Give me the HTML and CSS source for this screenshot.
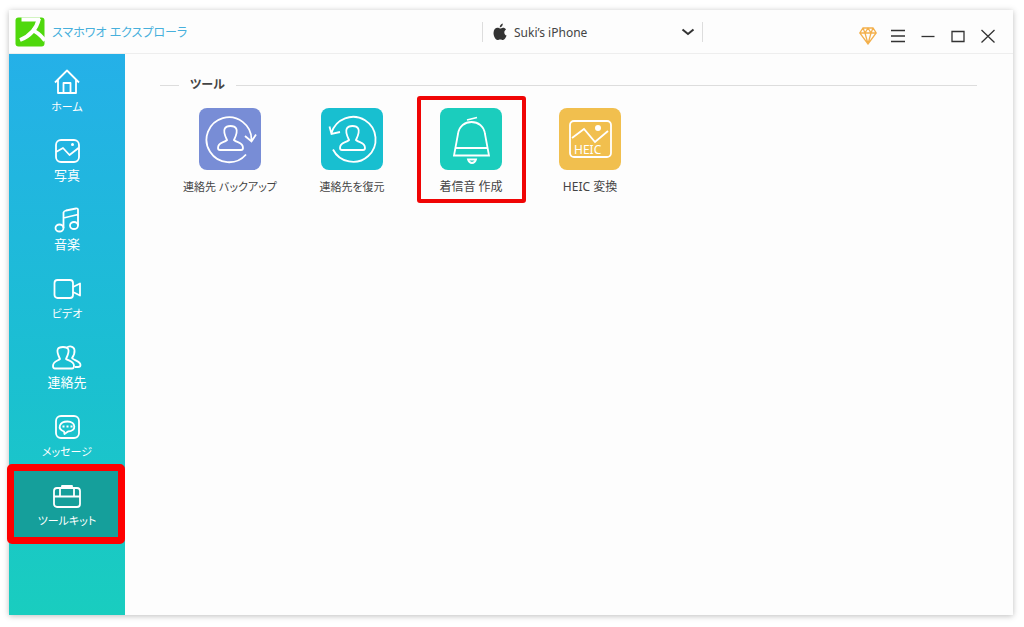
FILE: index.html
```
<!DOCTYPE html>
<html lang="ja">
<head>
<meta charset="utf-8">
<meta name="viewport" content="width=device-width, initial-scale=1">
<title>スマホワオ エクスプローラ</title>
<link rel="stylesheet" href="styles.css">
</head>
<body>
<div class="window">
  <header class="titlebar">
    <div class="brand">
      <svg class="logo" viewBox="0 0 30 30" aria-hidden="true">
        <rect x="0.500" y="0.500" width="29" height="29" rx="3" fill="#4fd80c"/>
        <path d="M6.500 0.500H25V4.500H6.500z" fill="#fff"/>
        <path d="M24 1.500C21.500 12 14 19.500 5 23" fill="none" stroke="#fff" stroke-width="4"/>
        <path d="M17 13C21 14.500 26 18.500 30 23.500" fill="none" stroke="#fff" stroke-width="4"/>
      </svg>
      <span class="brand-name">スマホワオ エクスプローラ</span>
    </div>
    <button class="device" type="button" aria-haspopup="listbox">
      <svg class="apple" viewBox="0 0 14 18" aria-hidden="true"><path d="M9.800 0.500C9.900 2.500 8.500 4.300 6.800 4.400C6.600 2.600 8 0.900 9.800 0.500ZM7 5.500C8 5.500 8.700 4.700 10 4.700C11.300 4.700 12.400 5.400 13 6.400C10.500 7.900 10.900 11.500 13.600 12.600C12.900 14.600 11.500 17 10 17C9 17 8.500 16.400 7.300 16.400C6 16.400 5.500 17 4.600 17C2.700 17 0.500 13.500 0.500 10C0.500 6.600 2.500 4.800 4.500 4.800C5.600 4.800 6.300 5.500 7 5.500Z" fill="#333"/></svg>
      <span class="device-name">Suki’s iPhone</span>
      <svg class="chevron" viewBox="0 0 14 8" aria-hidden="true"><path d="M1.500 1.500L7 6L12.500 1.500" fill="none" stroke="#333" stroke-width="2"/></svg>
    </button>
    <div class="controls">
      <button type="button" class="control gem" aria-label="アップグレード"><svg viewBox="0 0 18 18"><path d="M4 1H14L17.200 6L9 17L0.800 6ZM0.800 6H17.200M6 6L9 17L12 6M4 1L6 6L9 1L12 6L14 1"/></svg></button>
      <button type="button" class="control" aria-label="メニュー"><svg viewBox="0 0 18 18"><path d="M2 3.500H16M2 9H16M2 14.500H16"/></svg></button>
      <button type="button" class="control" aria-label="最小化"><svg viewBox="0 0 18 18"><path d="M2.500 9.500H15.500"/></svg></button>
      <button type="button" class="control" aria-label="最大化"><svg viewBox="0 0 18 18"><path d="M3 4.500H15V14.500H3Z"/></svg></button>
      <button type="button" class="control" aria-label="閉じる"><svg viewBox="0 0 18 18"><path d="M2.500 3L15.500 15.500M15.500 3L2.500 15.500"/></svg></button>
    </div>
  </header>
  <div class="body">
    <nav class="sidebar">
      <a class="nav-item kana" href="#home"><svg viewBox="0 0 30 28"><path d="M3 14.500L15 2.500L27 14.500M6 12V25H24V12M11.500 25V15H18.500V25"/></svg><span>ホーム</span></a>
      <a class="nav-item" href="#photos"><svg viewBox="0 0 30 28"><rect x="4" y="3" width="23" height="22" rx="5"/><path d="M4 15L11 11L17.500 18L26.500 11"/><circle cx="20.500" cy="7.500" r="1.500" fill="#fff" stroke="none"/></svg><span>写真</span></a>
      <a class="nav-item" href="#music"><svg viewBox="0 0 30 28"><ellipse cx="7.500" cy="22" rx="4" ry="3.500"/><ellipse cx="22" cy="19.500" rx="4" ry="3.500"/><path d="M11.500 22V6.500Q12 5 14 4.500L24 2.500Q26 2 26 4V19.500M11.500 12L26 8.500"/></svg><span>音楽</span></a>
      <a class="nav-item kana" href="#video"><svg viewBox="0 0 30 28"><rect x="2.500" y="5" width="18.500" height="18" rx="3"/><path d="M21 12L28 8.500V20.500L21 17"/></svg><span>ビデオ</span></a>
      <a class="nav-item" href="#contacts"><svg viewBox="0 0 30 28"><path d="M8 15C3 5 6 3 11 3C16 3 19 5 14 15C17 17 22 17 22 22Q22 24.500 20 24.500H3Q1 24.500 1 22C1 17 6 17 8 15Z"/><path d="M14.500 4C17 1.500 22 2 22.500 6Q23 10 20 14C22 16.500 28.500 17 28.500 21Q28.500 23 26 23H23"/></svg><span>連絡先</span></a>
      <a class="nav-item kana" href="#messages"><svg viewBox="0 0 30 28"><rect x="4" y="3" width="23" height="22" rx="5"/><path d="M12 18.500C5 16 7 8.500 15.500 8.500C24 8.500 25 18.500 16 18.500L12.500 21Z"/><path d="M10.500 13.500H12.500M14.500 13.500H16.500M18.500 13.500H20.500"/></svg><span>メッセージ</span></a>
      <a class="nav-item kana active" href="#toolkit" aria-current="page"><svg viewBox="0 0 30 28"><rect x="2" y="6" width="26" height="19" rx="3"/><path d="M2 14.500H28M10 6V4H20V6M8 6V14M22 6V14"/></svg><span>ツールキット</span></a>
    </nav>
    <main class="content">
      <h1 class="section-title">ツール</h1>
      <div class="tools">
        <button class="tool kana" type="button">
          <svg viewBox="0 0 62 62"><rect class="bg" width="62" height="62" rx="8" fill="#788dd6"/><path d="M47 46.500A22.500 22.500 0 1 1 52.500 32M46 28L52.500 33.500L57 26.500"/><path d="M28 32C22 20 27 18 31.500 18C36 18 41 20 35 32C38 35 44 34 44 40Q44 42 42 42H21Q19 42 19 40C19 34 25 35 28 32Z"/></svg>
          <span>連絡先 バックアップ</span>
        </button>
        <button class="tool kana" type="button">
          <svg viewBox="0 0 62 62"><rect class="bg" width="62" height="62" rx="8" fill="#18bfd0"/><path d="M12 41.500A22.500 22.500 0 1 0 10.500 25M8.500 18.500L10.500 26L19 24"/><path d="M28 32C22 20 27 18 31.500 18C36 18 41 20 35 32C38 35 44 34 44 40Q44 42 42 42H21Q19 42 19 40C19 34 25 35 28 32Z"/></svg>
          <span>連絡先を復元</span>
        </button>
        <button class="tool marked" type="button">
          <svg viewBox="0 0 62 62"><rect class="bg" width="62" height="62" rx="8" fill="#1bcdbd"/><path d="M14 47.500L18 26C19 18 25 14 31.500 14C38 14 44 18 45 26L49 47.500ZM16 40H47M27 12L37 9.500M28 51.500H36Q35 55 32 55Q29 55 28 51.500Z"/></svg>
          <span>着信音 作成</span>
        </button>
        <button class="tool" type="button">
          <svg viewBox="0 0 62 62"><rect class="bg" width="62" height="62" rx="8" fill="#f1bf4e"/><rect x="11" y="13" width="41" height="36" rx="4"/><path d="M13 30L25 21L36 34L49 23"/><circle cx="39" cy="20" r="3" fill="#fff" stroke="none"/><text class="heic" x="15" y="46">HEIC</text></svg>
          <span>HEIC 変換</span>
        </button>
      </div>
    </main>
  </div>
</div>
</body>
</html>
```
FILE: styles.css
```
* { box-sizing: border-box; }

body {
  margin: 0;
  min-height: 100vh;
  padding: 10px 11px 12px 9px;
  display: flex;
  background: #fff;
  color: #444;
  font-family: "Noto Sans", "Noto Sans CJK JP", sans-serif;
  font-feature-settings: "palt";
}

button {
  margin: 0;
  padding: 0;
  border: 0;
  background: none;
  color: inherit;
  font: inherit;
  font-feature-settings: inherit;
}

svg { display: block; }

.window {
  flex: 1;
  display: flex;
  flex-direction: column;
  background: #fdfdfd;
  box-shadow: 0 1px 6px rgba(0, 0, 0, 0.26);
}

.titlebar {
  height: 44px;
  display: grid;
  grid-template-columns: 473px 221px 1fr;
  border-bottom: 1px solid #eee;
}

.brand {
  display: flex;
  align-items: center;
  gap: 7px;
  padding-left: 6px;
}

.logo { width: 30px; height: 30px; }

.brand-name {
  color: #47b0dc;
  font-size: 12px;
  line-height: 20px;
  padding-top: 2px;
  white-space: nowrap;
}

.device {
  align-self: center;
  height: 20px;
  display: flex;
  align-items: center;
  gap: 7px;
  padding: 0 7px 0 10px;
  border: solid #ddd;
  border-width: 0 1px;
  font-family: "Noto Sans", sans-serif;
  font-size: 12px;
  line-height: 20px;
}

.device-name { padding-top: 2px; }
.apple { width: 14px; height: 18px; }
.chevron { width: 14px; height: 8px; margin-left: auto; }

.controls {
  display: flex;
  justify-content: flex-end;
  align-items: center;
  gap: 12px;
  padding: 8px 16px 0 0;
}

.control svg {
  width: 18px;
  height: 18px;
  fill: none;
  stroke: #333;
  stroke-width: 1.3;
}

.gem svg { stroke: #f3b04c; stroke-width: 1.3; }

.body { flex: 1; display: flex; }

.sidebar {
  width: 116px;
  padding-top: 1px;
  background: linear-gradient(#25b0e8, #1bbfd2 55%, #19cdbf);
}

.nav-item {
  position: relative;
  height: 69px;
  padding-top: 13px;
  display: flex;
  flex-direction: column;
  align-items: center;
  gap: 1px;
  color: #fff;
  font-size: 13px;
  line-height: 18px;
  text-decoration: none;
  white-space: nowrap;
}

.nav-item.kana {
  font-size: 11px;
  line-height: 20px;
}

.nav-item svg {
  width: 30px;
  height: 28px;
  fill: none;
  stroke: #fff;
  stroke-width: 1.8;
  stroke-linejoin: round;
}

.active { background: #159f9b; }

.active::after {
  content: "";
  position: absolute;
  inset: -5px 0 -6px -2px;
  border: 7px solid #fe0000;
  border-radius: 5px;
}

.content { flex: 1; padding: 20px 36px 0 35px; }

.section-title {
  margin: 0;
  display: flex;
  align-items: center;
  gap: 11px;
  font-size: 12px;
  font-weight: 700;
  line-height: 22px;
}

.section-title::before,
.section-title::after {
  content: "";
  height: 1px;
  background: #ddd;
}

.section-title::before { width: 19px; }
.section-title::after { flex: 1; }

.tools {
  display: grid;
  grid-template-columns: 122px 122px 116px 122px;
  padding: 12px 0 0 9px;
}

.tool {
  position: relative;
  display: flex;
  flex-direction: column;
  align-items: center;
  gap: 7px;
  font-size: 12px;
  line-height: 20px;
  white-space: nowrap;
}

.tool.kana { font-size: 11px; }

.tool svg {
  width: 62px;
  height: 62px;
  fill: none;
  stroke: #fff;
  stroke-width: 1.8;
}

.tool .bg { stroke: none; }

.heic {
  fill: #fff;
  stroke: none;
  font-size: 12px;
}

.marked::after {
  content: "";
  position: absolute;
  inset: -12px 3px -6px 4px;
  border: 4px solid #f00505;
  border-radius: 3px;
}
```
